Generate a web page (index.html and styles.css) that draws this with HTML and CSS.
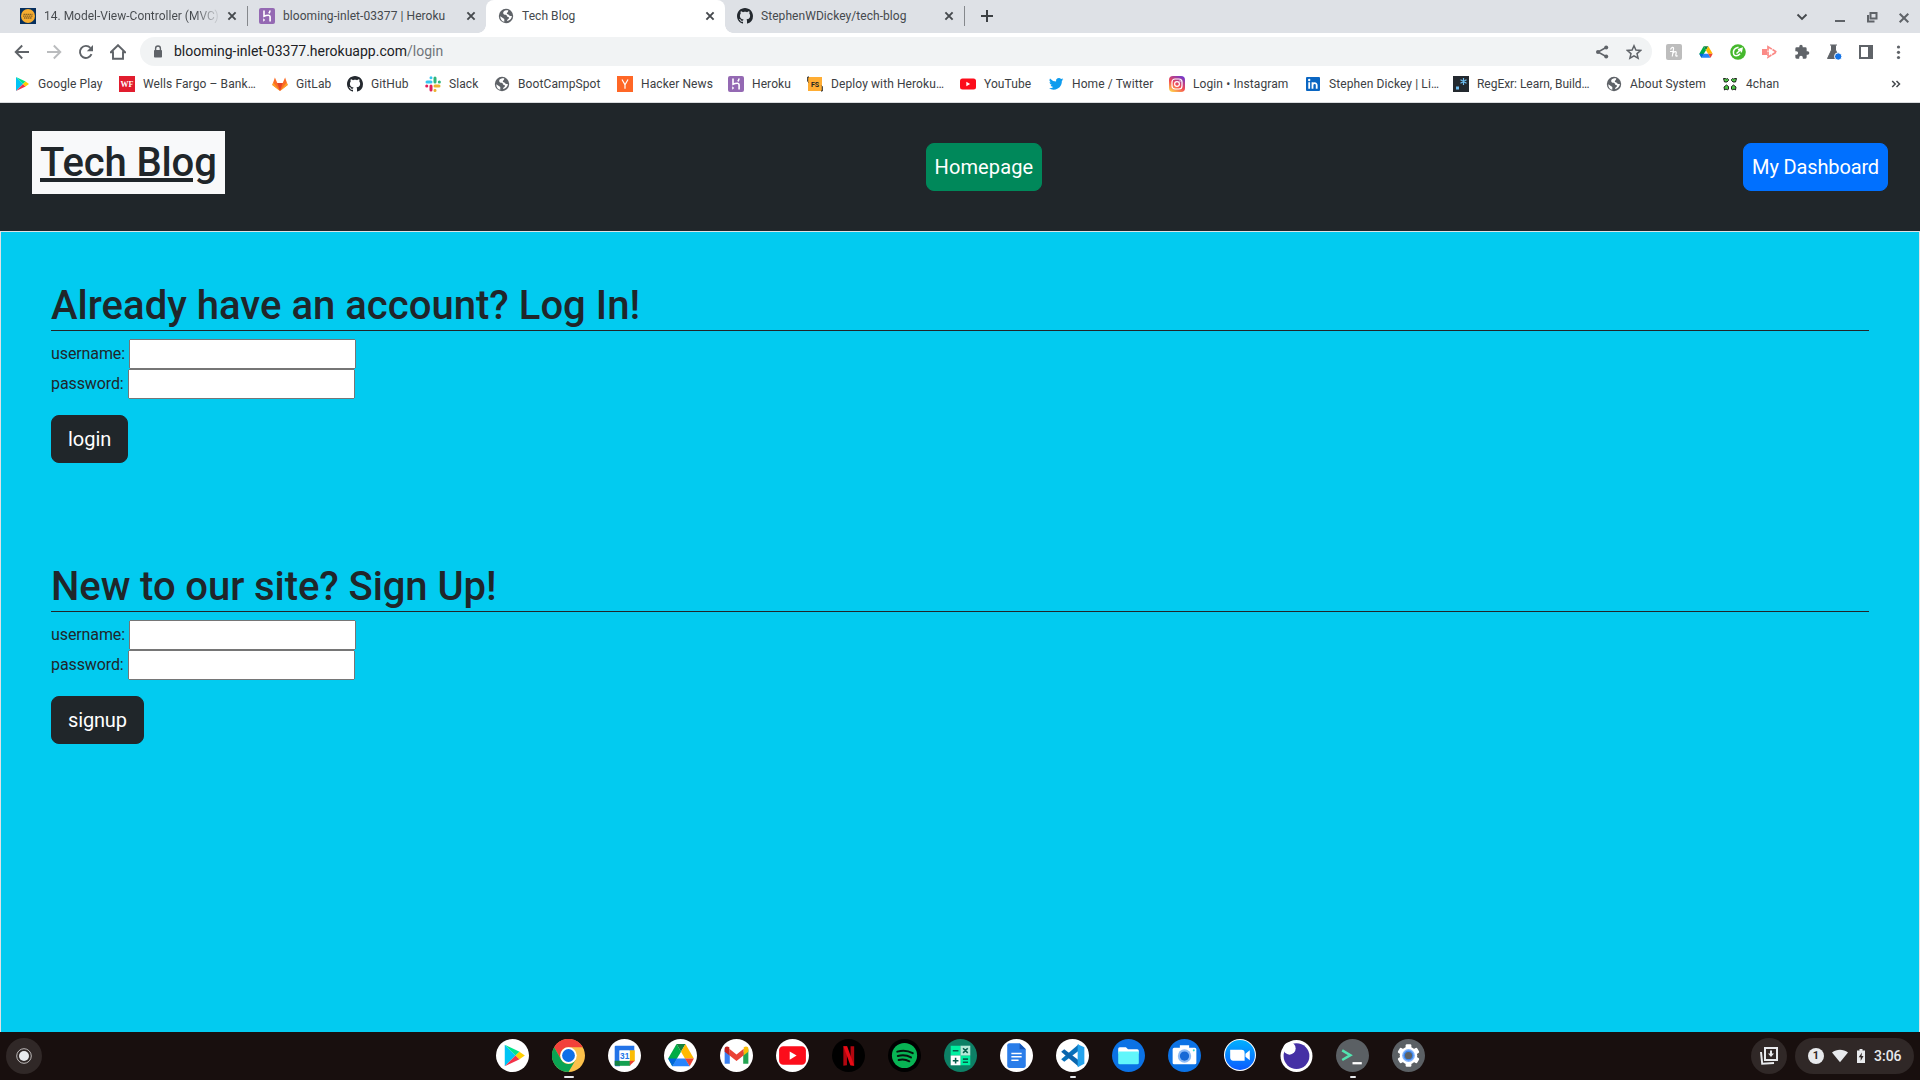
FILE: index.html
```html
<!DOCTYPE html>
<html lang="en">
<head>
<meta charset="utf-8">
<title>Tech Blog</title>
<link rel="stylesheet" href="styles.css">
</head>
<body>
<svg class="defs" width="0" height="0">
  <symbol id="x" viewBox="0 0 16 16"><path d="M4.4 4.4l7.2 7.2M11.6 4.4l-7.2 7.2" stroke="#45494d" stroke-width="1.9" fill="none"/></symbol>
  <symbol id="globe" viewBox="0 0 16 16"><circle cx="8" cy="8" r="7.2" fill="#5f6368"/><path d="M2.3 8.2l4 2.7v2.9c-2.500-.6-4.200-2.700-4-5.600zM8.200 2.300c-2 .3-3.300 1.600-3 3 .2 1.200 1.200 1.400 2.400 1.500 1.400.1 1 1.900 2.200 2.100 1.300.2 1.500.9 1 1.700-.6.9-1.700 1-1.800 2.400 2.700-.2 4.800-2.300 4.900-4.900-1.700.1-2.800-.4-3.200-1.300-.3-.8-1.800-.5-1.900-1.400-.1-.8 1.700-.9 1.400-3.100z" fill="#fff"/></symbol>
  <symbol id="github" viewBox="0 0 16 16"><path fill="#24292f" d="M8 0C3.58 0 0 3.58 0 8c0 3.54 2.29 6.53 5.47 7.59.4.07.55-.17.55-.38 0-.19-.01-.82-.01-1.49-2.01.37-2.53-.49-2.69-.94-.09-.23-.48-.94-.82-1.13-.28-.15-.68-.52-.01-.53.63-.01 1.080.58 1.230.82.72 1.210 1.870.87 2.330.66.07-.52.28-.87.51-1.070-1.780-.2-3.640-.89-3.640-3.950 0-.87.31-1.590.82-2.150-.08-.2-.36-1.020.08-2.120 0 0 .67-.21 2.200.82.64-.18 1.320-.27 2-.27s1.360.09 2 .27c1.530-1.040 2.200-.82 2.200-.82.44 1.100.16 1.920.08 2.120.51.56.82 1.270.82 2.150 0 3.070-1.870 3.750-3.650 3.950.29.25.54.73.54 1.480 0 1.070-.01 1.930-.01 2.200 0 .21.15.46.55.38A8.010 8.010 0 0 0 16 8c0-4.420-3.580-8-8-8z"/></symbol>
  <symbol id="heroku" viewBox="0 0 16 16"><rect width="16" height="16" rx="2" fill="#9469b3"/><path d="M5 2.500v5.800c1.500-.7 3-1 4.200-1 1.300 0 1.900.6 1.900 1.700v4.500M11 2.500c0 1.100-.4 2-1.200 2.900" fill="none" stroke="#fff" stroke-width="1.600"/><path d="M4.200 10.300v3.400l2-1.700z" fill="#fff"/></symbol>
  <symbol id="play" viewBox="0 0 16 16"><path d="M2 1v14l7-7z" fill="#00c4f5"/><path d="M2 1l7 7 2.600-2.400z" fill="#00e38c"/><path d="M2 15l7-7 2.600 2.400z" fill="#f43249"/><path d="M11.500 5.500L15 8l-3.500 2.500L9 8z" fill="#ffcf00"/></symbol>
  <symbol id="drive" viewBox="0 0 24 22"><path d="M8 1h8l-4 7z" fill="#15803c"/><path d="M8 1L0.500 14 4.200 21 12 8z" fill="#00ac47"/><path d="M16 1l7.500 13H15.500L12 8z" fill="#ffba00"/><path d="M4.200 21L8.200 14h7.600l4 7z" fill="#2684fc"/><path d="M15.500 14h8l-3.700 7z" fill="#ea4335"/><path d="M.5 14h7.800L4.200 21z" fill="#0066da"/></symbol>
</svg>

<div class="tabstrip">
  <div class="tab">
    <svg class="fav" viewBox="0 0 16 16"><rect width="16" height="16" fill="#08305e"/><circle cx="8" cy="8" r="7" fill="#f6ac2f"/><path d="M3.500 6.300h9M3 8.200h10M4 10h8" stroke="#8a6424" stroke-width="1.300" stroke-dasharray="1.500 .5"/></svg>
    <span class="title fade">14. Model-View-Controller (MVC)</span><svg class="close"><use href="#x"/></svg>
  </div>
  <div class="tab divided">
    <svg class="fav"><use href="#heroku"/></svg>
    <span class="title">blooming-inlet-03377 | Heroku</span><svg class="close"><use href="#x"/></svg>
  </div>
  <div class="tab active">
    <svg class="fav"><use href="#globe"/></svg>
    <span class="title">Tech Blog</span><svg class="close"><use href="#x"/></svg>
  </div>
  <div class="tab">
    <svg class="fav"><use href="#github"/></svg>
    <span class="title">StephenWDickey/tech-blog</span><svg class="close"><use href="#x"/></svg>
  </div>
  <div class="newtab"><svg width="16" height="16" viewBox="0 0 16 16"><path d="M8 2v12M2 8h12" stroke="#3c4043" stroke-width="2"/></svg></div>
  <div class="window-controls">
    <svg viewBox="0 0 16 16"><path d="M3.500 5.500L8 10l4.500-4.500" fill="none" stroke="#45494d" stroke-width="1.900"/></svg>
    <svg viewBox="0 0 16 16"><path d="M3 12h10" stroke="#5f6368" stroke-width="2"/></svg>
    <svg viewBox="0 0 16 16"><path d="M6.500 4h6v5.500h-6zM4 6v6.500h6.500" fill="none" stroke="#5f6368" stroke-width="2"/></svg>
    <svg viewBox="0 0 16 16"><path d="M3.700 4.700l8.600 8.600M12.300 4.700l-8.600 8.600" stroke="#5f6368" stroke-width="2"/></svg>
  </div>
</div>

<div class="toolbar">
  <div class="nav">
    <svg viewBox="0 0 16 16"><path d="M15 8H2M8.200 1.500L1.700 8l6.500 6.500" fill="none" stroke="#5f6368" stroke-width="1.900"/></svg>
    <svg viewBox="0 0 16 16"><path d="M1 8h13M7.800 1.500L14.300 8l-6.500 6.500" fill="none" stroke="#babcbe" stroke-width="1.900"/></svg>
    <svg viewBox="0 0 16 16"><path d="M13.500 10.200A6 6 0 1 1 12.400 3.900" fill="none" stroke="#5f6368" stroke-width="1.900"/><path d="M15 1v6.200H8.800z" fill="#5f6368"/></svg>
    <svg viewBox="0 0 16 16"><path d="M.8 8.300L8 1.200l7.200 7.100H13v6.400H3V8.300z" fill="none" stroke="#5f6368" stroke-width="1.900"/></svg>
  </div>
  <div class="omnibox">
    <svg viewBox="0 0 16 16"><rect x="4" y="6" width="8" height="7.500" rx=".8" fill="#5f6368"/><path d="M5.600 6.500V4.400a2.400 2.400 0 0 1 4.800 0v2.100" fill="none" stroke="#5f6368" stroke-width="1.400"/></svg>
    <span class="url">blooming-inlet-03377.herokuapp.com<i>/login</i></span>
    <svg viewBox="0 0 16 16"><path d="M12 3.500L4 8l8 4.500" fill="none" stroke="#5f6368" stroke-width="1.500"/><g fill="#5f6368"><circle cx="12.200" cy="3.500" r="2"/><circle cx="4" cy="8" r="2"/><circle cx="12.200" cy="12.500" r="2"/></g></svg>
    <svg viewBox="0 0 16 16"><path d="M8 1.800l1.900 4.300 4.700.4-3.600 3.100 1.100 4.600L8 11.800l-4.100 2.400L5 9.600 1.400 6.500l4.700-.4z" fill="none" stroke="#5f6368" stroke-width="1.500"/></svg>
  </div>
  <div class="extensions">
    <svg viewBox="0 0 16 16"><rect width="16" height="16" rx="2" fill="#bdbdbd"/><path d="M4.500 5.500c1-2.500 3.500-3 3-.5L6.300 12.500M4 7.500h4M6.800 9.500c1-2.300 3.700-2.700 3.400-.6l-.4 2.300c-.1 1.200.9 1.200 1.700.3" fill="none" stroke="#fff" stroke-width="1.200"/></svg>
    <svg viewBox="0 0 16 16"><svg x="1" y="1.500" width="14" height="13"><use href="#drive"/></svg></svg>
    <svg viewBox="0 0 16 16"><circle cx="8" cy="8" r="7.800" fill="#45b82c"/><path d="M8.500 3.300C5 4 3 6.500 3.500 9.500c.5 3 4.300 3.200 6.500.3M6.500 9.500L11.500 5M8 5.700l4-1.300-.8 4" fill="none" stroke="#fff" stroke-width="1.500"/></svg>
    <svg viewBox="0 0 16 16"><path d="M0 5h5v6H0z" fill="#fb8a86"/><path d="M6 2.800L14.500 8 6 13.200z" fill="none" stroke="#fb8a86" stroke-width="1.700" stroke-dasharray="4.500 .8"/></svg>
    <svg viewBox="0 0 24 24"><path fill="#5f6368" d="M20.500 11H19V7a2 2 0 0 0-2-2h-4V3.500a2.500 2.500 0 0 0-5 0V5H4a2 2 0 0 0-2 2v3.800h1.500a2.700 2.700 0 0 1 0 5.400H2V20a2 2 0 0 0 2 2h3.800v-1.500a2.700 2.700 0 0 1 5.400 0V22H17a2 2 0 0 0 2-2v-4h1.500a2.500 2.500 0 0 0 0-5z"/></svg>
    <svg viewBox="0 0 16 16"><path d="M4 1h7M5.500 1.500h4v4.500l4 8.500H1.500l4-8.500z" fill="#5f6368" stroke="#5f6368"/><circle cx="12.200" cy="12.500" r="3.700" fill="#1473e6" stroke="#fff"/></svg>
    <svg viewBox="0 0 16 16"><path d="M2 2h12v12H2z" fill="none" stroke="#5f6368" stroke-width="2"/><path d="M10 2h4v12h-4z" fill="#5f6368"/></svg>
    <svg viewBox="0 0 16 16"><g fill="#5f6368"><circle cx="8.500" cy="3" r="1.600"/><circle cx="8.500" cy="8.300" r="1.600"/><circle cx="8.500" cy="13.500" r="1.600"/></g></svg>
  </div>
</div>

<div class="bookmarks">
  <div class="bm"><svg><use href="#play"/></svg>Google Play</div>
  <div class="bm"><svg viewBox="0 0 16 16"><rect width="16" height="16" fill="#e11d2e"/><text class="wf" x="8" y="11" text-anchor="middle">WF</text></svg>Wells Fargo – Bank…</div>
  <div class="bm"><svg viewBox="0 0 16 16"><path d="M8 15L.3 9 2.900 1.500 5.300 7h5.400l2.400-5.500L15.700 9z" fill="#fc6d26"/><path d="M8 15L5.300 7h5.400z" fill="#e24329"/><path d="M8 15L.3 9l.9-2.600zM8 15l7.700-6-.9-2.600z" fill="#fca326"/></svg>GitLab</div>
  <div class="bm"><svg><use href="#github"/></svg>GitHub</div>
  <div class="bm"><svg viewBox="0 0 16 16" fill="none" stroke-width="3" stroke-linecap="round"><path d="M6 1.700V1.800M2 6h4" stroke="#36c5f0"/><path d="M10 2v4M14.300 6h.1" stroke="#2eb67d"/><path d="M10 10h4M10 14.300v.1" stroke="#ecb22e"/><path d="M6 10v4M1.700 10h.1" stroke="#e01e5a"/></svg>Slack</div>
  <div class="bm"><svg><use href="#globe"/></svg>BootCampSpot</div>
  <div class="bm"><svg viewBox="0 0 16 16"><rect width="16" height="16" fill="#ff6726"/><path d="M5 3.500l3 5.300 3-5.300M8 8.500v4.300" fill="none" stroke="#fff" stroke-width="1.200"/></svg>Hacker News</div>
  <div class="bm"><svg><use href="#heroku"/></svg>Heroku</div>
  <div class="bm"><svg viewBox="0 0 16 16"><rect x="1" y="1" width="14" height="14" fill="#ffad33"/><path d="M2 1H.7v4.500l.8.800M14 15h1.300v-4.500l-.8-.8" fill="none" stroke="#222" stroke-width="1"/><text class="fs" x="8" y="11" text-anchor="middle">FS</text></svg>Deploy with Heroku…</div>
  <div class="bm"><svg viewBox="0 0 16 16"><rect y="2.500" width="16" height="11" rx="2.500" fill="#fc0d1b"/><path d="M6.300 5.800v4.400L10.200 8z" fill="#fff"/></svg>YouTube</div>
  <div class="bm"><svg viewBox="0 0 24 24"><path fill="#0f9cee" d="M23 5a9 9 0 0 1-2.500.7 4.400 4.400 0 0 0 1.900-2.400 9 9 0 0 1-2.800 1.100 4.400 4.400 0 0 0-7.500 4A12.500 12.500 0 0 1 3 3.800a4.400 4.400 0 0 0 1.400 5.900 4.400 4.400 0 0 1-2-.6c0 2.200 1.500 4 3.500 4.400a4.400 4.400 0 0 1-2 .1 4.400 4.400 0 0 0 4.100 3A8.900 8.900 0 0 1 1.500 18.500 12.500 12.500 0 0 0 20.800 7.400 9 9 0 0 0 23 5z"/></svg>Home / Twitter</div>
  <div class="bm"><svg viewBox="0 0 16 16"><defs><linearGradient id="ig" x1=".2" y1="1" x2=".8" y2="0"><stop offset="0" stop-color="#ffd04f"/><stop offset=".45" stop-color="#f34852"/><stop offset="1" stop-color="#7137cc"/></linearGradient></defs><rect width="16" height="16" rx="4" fill="url(#ig)"/><rect x="3" y="3" width="10" height="10" rx="3" fill="none" stroke="#fff" stroke-width="1.200"/><circle cx="8" cy="8" r="2.400" fill="none" stroke="#fff" stroke-width="1.200"/><circle cx="11" cy="5" r=".7" fill="#fff"/></svg>Login • Instagram</div>
  <div class="bm"><svg viewBox="0 0 16 16"><rect x="1" y="1" width="14" height="14" rx="1" fill="#0a66c2"/><path d="M4.200 6.300v6.500M7.500 12.800V6.300M7.500 9.500c0-3 4.200-3 4.200-.3v3.600" fill="none" stroke="#fff" stroke-width="1.800"/><circle cx="4.200" cy="4" r="1.200" fill="#fff"/></svg>Stephen Dickey | Li…</div>
  <div class="bm tight"><svg viewBox="0 0 16 16"><rect width="16" height="16" fill="#23292f"/><path d="M3 10.500h3v3H3z" fill="#6fbef0"/><path d="M10.500 2v7M7.500 3.700l6 3.600M13.500 3.700l-6 3.600" stroke="#6fbef0" stroke-width="1.200"/></svg>RegExr: Learn, Build…</div>
  <div class="bm"><svg><use href="#globe"/></svg>About System</div>
  <div class="bm"><svg viewBox="0 0 16 16" fill="#4cc545" stroke="#111" stroke-width=".9"><path d="M1.500 2.500h2l1 .5 1-.5 1 1v1L5 6H2.500L2 4.500zM14.500 2.500h-2l-1 .5-1-.5-1 1v1L11 6h2.500l.5-1.500zM2.500 14l-.5-3 2.500-2 2 1.500v2.500l-1 1-1.500-1zM13.500 14l.5-3-2.500-2-2 1.500v2.500l1 1 1.500-1z"/></svg>4chan</div>
  <svg class="overflow" width="10" height="10" viewBox="0 0 10 10"><path d="M1.200 2l3 3-3 3M5.500 2l3 3-3 3" fill="none" stroke="#45494d" stroke-width="1.500"/></svg>
</div>

<header class="site-header">
  <h1><a>Tech Blog</a></h1>
  <a class="btn home">Homepage</a>
  <a class="btn dash">My Dashboard</a>
</header>
<main>
  <form>
    <h2>Already have an account? Log In!</h2>
    <div class="field"><label>username: <input type="text"></label></div>
    <div class="field"><label>password: <input type="password"></label></div>
    <button type="button" class="btn dark">login</button>
  </form>
  <form>
    <h2 class="signup-title">New to our site? Sign Up!</h2>
    <div class="field"><label>username: <input type="text"></label></div>
    <div class="field"><label>password: <input type="password"></label></div>
    <button type="button" class="btn dark signup">signup</button>
  </form>
</main>

<footer class="shelf">
  <div class="launcher"><svg width="16" height="16" viewBox="0 0 16 16"><circle cx="8" cy="8" r="7.300" fill="none" stroke="#bdb9b9"/><circle cx="8" cy="8" r="5" fill="#e8eaed"/></svg></div>
  <div class="apps">
    <div class="app"><svg viewBox="0 0 32 32"><circle cx="16" cy="16" r="16" fill="#fff"/><svg x="5" y="4" width="25" height="24"><use href="#play"/></svg></svg></div>
    <div class="app run focus"><svg viewBox="0 0 32 32"><circle cx="16" cy="16" r="16" fill="#fbc04a"/><path d="M2.100 8A16 16 0 0 1 29.900 8H16a8 8 0 0 0-7 12z" fill="#f2413a"/><path d="M2.100 8A16 16 0 0 0 16 32l7-12a8 8 0 0 1-14 0z" fill="#0aa453"/><circle cx="16" cy="16" r="8" fill="#fff"/><circle cx="16" cy="16" r="6.200" fill="#0f6fe8"/></svg></div>
    <div class="app"><svg viewBox="0 0 32 32"><circle cx="16" cy="16" r="16" fill="#fff"/><path d="M6.500 7.500a1 1 0 0 1 1-1h18v5h-14v15h-4a1 1 0 0 1-1-1z" fill="#2374e8"/><path d="M21 11h5v10.500h-5z" fill="#fbbc04"/><path d="M11 21h10.500v5H11z" fill="#14a050"/><path d="M21 21h5l-5 5z" fill="#ea4335"/><path d="M6.500 21h5v5h-4a1 1 0 0 1-1-1z" fill="#138242"/><path d="M11 11h10v10H11z" fill="#fff"/><text class="cal" x="16.200" y="19" text-anchor="middle">31</text></svg></div>
    <div class="app"><svg viewBox="0 0 32 32"><circle cx="16" cy="16" r="16" fill="#fff"/><svg x="3.500" y="3.700" width="26" height="24"><use href="#drive"/></svg></svg></div>
    <div class="app"><svg viewBox="0 0 32 32"><circle cx="16" cy="16" r="16" fill="#fff"/><path d="M4.500 10v14h5V14z" fill="#3a80f0"/><path d="M22.500 13v11h5V10z" fill="#25a552"/><path d="M9 9.500l7 5.500 7-5.500v6.300l-7 5.500-7-5.500z" fill="#ea4335"/><path d="M4.500 11V9.500c0-2.500 2.500-3 4.500-1.500v7.800l-4.500-3.500z" fill="#c5221f"/><path d="M27.500 11V9.500c0-2.500-2.500-3-4.500-1.500v7.800l4.500-3.500z" fill="#fbbc04"/></svg></div>
    <div class="app"><svg viewBox="0 0 32 32"><circle cx="16" cy="16" r="16" fill="#fff"/><rect x="3" y="7" width="26" height="18" rx="4" fill="#fc0d1b"/><path d="M13.300 12v8l6.700-4z" fill="#fff"/></svg></div>
    <div class="app"><svg viewBox="0 0 32 32"><circle cx="16" cy="16" r="16" fill="#000"/><path d="M11 7h3.500v18.500l-3.500.4zM18 7h3.500v18.900l-3.500-.4z" fill="#b0060f"/><path d="M11 7h3.700l6.800 18.900-3.700-.4z" fill="#e80b16"/></svg></div>
    <div class="app"><svg viewBox="0 0 32 32"><circle cx="16" cy="16" r="16" fill="#000"/><circle cx="16" cy="16" r="12.200" fill="#08b454"/><path d="M9 12.300c5-1.500 10.500-1 15 1.500M9.500 16.500c4.300-1.200 9-.8 12.800 1.400M10.300 20.300c3.700-.9 7.200-.5 10.400 1.300" fill="none" stroke="#06150d" stroke-width="1.900" stroke-linecap="round"/></svg></div>
    <div class="app"><svg viewBox="0 0 32 32"><circle cx="16" cy="16" r="16" fill="#0d8065"/><path d="M6.500 6.500H16V16H6.500zM16 16h9.500v9.500H16z" fill="#00efa0"/><path d="M16 6.500h9.500V16H16z" fill="#b8e8d8"/><path d="M6.500 16H16v9.500H6.500z" fill="#fff"/><path d="M8.500 11.300h5.500M18.500 9l4.500 4.500M23 9l-4.500 4.500M8.500 21H14M11.250 18.200v5.600M18.300 19.500h5M18.300 22.500h5" stroke="#075e4c" stroke-width="1.500"/></svg></div>
    <div class="app"><svg viewBox="0 0 32 32"><circle cx="16" cy="16" r="16" fill="#fff"/><path d="M9 4h10l6 6v16a2 2 0 0 1-2 2H9a2 2 0 0 1-2-2V6a2 2 0 0 1 2-2z" fill="#2a7de9"/><path d="M19 4l6 6h-6z" fill="#1656b5"/><path d="M11 14h10M11 17.300h10M11 20.600h7" stroke="#fff" stroke-width="1.500"/></svg></div>
    <div class="app run"><svg viewBox="0 0 32 32"><circle cx="16" cy="16" r="16" fill="#fff"/><path d="M22 5v6.500L8 22l-3-2.300z" fill="#0871bb"/><path d="M22 27v-6.500L8 10l-3 2.300z" fill="#0a65ad"/><path d="M21 5l6.500 3v16L21 27.500z" fill="#24a3ec"/></svg></div>
    <div class="app"><svg viewBox="0 0 32 32"><circle cx="16" cy="16" r="16" fill="#0b72e5"/><path d="M6 9.500a1.500 1.500 0 0 1 1.500-1.500h6l2 2h9a1.500 1.500 0 0 1 1.500 1.500V14H6z" fill="#fff"/><path d="M6 12h20v11a1.500 1.500 0 0 1-1.500 1.500h-17A1.500 1.500 0 0 1 6 23z" fill="#61f6fb"/></svg></div>
    <div class="app"><svg viewBox="0 0 32 32"><circle cx="16" cy="16" r="16" fill="#0b72e5"/><path d="M11.500 6h9v2.500H26A1.500 1.500 0 0 1 27.500 10v13a1.500 1.500 0 0 1-1.500 1.500H6A1.500 1.500 0 0 1 4.500 23V10A1.500 1.500 0 0 1 6 8.500h5.500z" fill="#fff"/><circle cx="16" cy="16.500" r="6.500" fill="#8ebcf7"/><circle cx="16" cy="16.500" r="4.500" fill="#1769d6"/><circle cx="25" cy="11" r="1" fill="#36d9d3"/></svg></div>
    <div class="app"><svg viewBox="0 0 32 32"><defs><linearGradient id="zm" x2="0" y2="1"><stop stop-color="#00b0ff"/><stop offset="1" stop-color="#0b5cff"/></linearGradient></defs><circle cx="15.500" cy="15.500" r="15.500" fill="#fff"/><circle cx="15.500" cy="15.500" r="14.500" fill="url(#zm)"/><path d="M6 10.500h11a3 3 0 0 1 3 3v7.500H9a3 3 0 0 1-3-3zM20.800 14.200L25 10.800v9.700l-4.200-3.200z" fill="#fff"/></svg></div>
    <div class="app"><svg viewBox="0 0 32 32"><circle cx="16" cy="16.500" r="15.500" fill="#fff"/><circle cx="16" cy="16.500" r="12.500" fill="#4530a5"/><circle cx="9.200" cy="9.200" r="6" fill="#fff"/></svg></div>
    <div class="app run"><svg viewBox="0 0 32 32"><circle cx="16" cy="16" r="16" fill="#5b6064"/><path d="M6 11l8 4.700-8 4.700" fill="none" stroke="#52e4b0" stroke-width="2.400"/><path d="M16 23.500h9" stroke="#fff" stroke-width="2.200"/></svg></div>
    <div class="app"><svg viewBox="0 0 32 32"><circle cx="16" cy="16" r="16" fill="#5b6064"/><circle cx="16" cy="16" r="8.500" fill="#fff"/><g fill="#fff"><rect id="g" x="13.200" y="5.200" width="5.600" height="21.600" rx="1.200"/><use href="#g" transform="rotate(60 16 16)"/><use href="#g" transform="rotate(120 16 16)"/></g><circle cx="16" cy="16" r="6.200" fill="#86b4f8"/><circle cx="16" cy="16" r="4.800" fill="#3a85ed"/><circle cx="16" cy="16" r="3.500" fill="#5b6064"/></svg></div>
  </div>
  <div class="tray">
    <div class="holding"><svg width="20" height="20" viewBox="0 0 20 20" fill="none" stroke="#e8eaed" stroke-width="2"><path d="M6 2h12v12H6zM2 6l1.200 11.800L15 17"/><path d="M12 4.500v4"/><path d="M9 7.500h6L12 11z" fill="#e8eaed" stroke="none"/></svg></div>
    <div class="status">
      <span class="count">1</span>
      <svg class="wifi" width="16" height="16" viewBox="0 0 16 16"><path d="M0 4.600C4.800.9 11.200.9 16 4.600L8 14.300z" fill="#e8eaed"/></svg>
      <svg class="battery" width="8" height="16" viewBox="0 0 8 16"><path d="M2.500 1h3v1.500H8V15H0V2.500h2.500z" fill="#e8eaed"/><path d="M5 4.500L1.700 9.200h2v3.800L6.500 8h-2z" fill="#302827"/></svg>
      <span class="time">3:06</span>
    </div>
  </div>
</footer>
</body>
</html>
```
FILE: styles.css
```css
* { box-sizing: border-box; }
body {
  margin: 0;
  height: 1080px;
  overflow: hidden;
  display: flex;
  flex-direction: column;
  font-family: Roboto, "Liberation Sans", sans-serif;
  color: #20262a;
  background: #fff;
}
.defs { position: absolute; }
svg { flex: none; display: block; }

/* Browser tabs */
.tabstrip {
  height: 33px;
  background: #dee1e6;
  display: flex;
  padding-left: 8px;
  font-size: 12px;
  color: #45494d;
}
.tab {
  width: 239px;
  height: 33px;
  padding: 0 7px 1px 12px;
  display: flex;
  align-items: center;
}
.fav { width: 16px; height: 16px; margin-right: 8px; }
.title { flex: 1; min-width: 0; white-space: nowrap; letter-spacing: .06px; }
.fade {
  letter-spacing: 0;
  color: transparent;
  background: linear-gradient(90deg, #45494d 150px, #dee1e6 178px);
  -webkit-background-clip: text;
  background-clip: text;
}
.close { width: 16px; height: 16px; margin-left: 6px; }
.divided {
  background: linear-gradient(#85888c, #85888c) 0 6px / 1px 20px no-repeat;
}
.active {
  background: #fff;
  border-radius: 8px 8px 0 0;
  position: relative;
}
.active::before, .active::after {
  content: "";
  position: absolute;
  bottom: 0;
  width: 8px;
  height: 8px;
}
.active::before { left: -8px; background: radial-gradient(circle at 0 0, transparent 7.500px, #fff 8px); }
.active::after { right: -8px; background: radial-gradient(circle at 8px 0, transparent 7.500px, #fff 8px); }
.newtab {
  margin-top: 6px;
  height: 20px;
  border-left: 1px solid #85888c;
  padding: 2px 0 0 14px;
}
.window-controls {
  flex: 1;
  display: flex;
  justify-content: flex-end;
  align-items: center;
  gap: 16px;
  padding-right: 8px;
}
.window-controls svg { width: 16px; height: 16px; }
.window-controls svg:first-child { margin-right: 6px; }

/* Address row */
.toolbar {
  height: 37px;
  display: flex;
  align-items: center;
  padding: 0 14px;
}
.nav { display: flex; gap: 16px; }
.nav svg, .extensions svg { width: 16px; height: 16px; }
.extensions svg svg { width: 14px; height: 13px; }
.omnibox {
  flex: 1;
  height: 29px;
  margin: 0 14px;
  background: #f1f3f4;
  border-radius: 15px;
  display: flex;
  align-items: center;
  gap: 16px;
  padding: 0 10px;
}
.omnibox svg { width: 16px; height: 16px; }
.url { flex: 1; margin: -1px 0 0 -8px; font-size: 14px; color: #202124; }
.url i { font-style: normal; color: #70757a; }
.extensions { display: flex; gap: 16px; }

.bookmarks {
  height: 33px;
  padding: 0 19px 4px 14px;
  border-bottom: 1px solid #d9dbde;
  display: grid;
  grid-template-columns: 105px 153px 75px 78px 69px 123px 111px 79px 153px 88px 121px 136px 148px 153px 116px 1fr auto;
  align-items: center;
  font-size: 12px;
  letter-spacing: .1px;
  color: #3c4043;
  white-space: nowrap;
}
.bm { display: flex; align-items: center; gap: 8px; }
.bm svg { width: 16px; height: 16px; }
.tight { letter-spacing: -.04px; }
.wf { font: bold 8px "Liberation Serif", serif; fill: #fff; letter-spacing: 0; }
.fs { font: bold 7px Roboto, sans-serif; fill: #222; letter-spacing: 0; }

/* Site */
.site-header {
  height: 128px;
  background: #20262a;
  padding: 0 32px;
  display: flex;
  justify-content: space-between;
  align-items: flex-start;
}
h1, h2 { margin: 0; font-size: 40px; font-weight: 500; line-height: 48px; }
h1 { padding-top: 36px; letter-spacing: -.12px; }
h1 a {
  background: #f8f9fa;
  padding: 8px;
  text-decoration: underline;
}
.btn {
  font: 400 20px/30px Roboto, "Liberation Sans", sans-serif;
  color: #fff;
  height: 48px;
  border: 1px solid transparent;
  border-radius: 8px;
  padding: 8px;
}
.home, .dash { margin-top: 40px; }
.home { background: #00885a; border-color: #00885a; letter-spacing: .1px; }
.dash { background: #0070ff; border-color: #0070ff; letter-spacing: -.14px; }
main {
  flex: 1;
  background: #02cbf0;
  border: 1px solid #dee2e6;
  border-bottom: 0;
  padding: 50px;
}
form { height: 281px; }
h2 { height: 49px; border-bottom: 1px solid #20262a; margin-bottom: 8px; letter-spacing: .03px; }
.signup-title { letter-spacing: -.08px; }
.field { height: 30px; font-size: 16px; line-height: 30px; white-space: nowrap; letter-spacing: -.1px; }
input { width: 227px; height: 30px; margin: 0; font: 16px/24px Roboto, sans-serif; vertical-align: top; }
.dark { margin-top: 16px; padding: 8px 16px; background: #20262a; border-color: #20262a; display: block; }
.signup { letter-spacing: -.15px; }

/* System shelf */
.shelf {
  height: 48px;
  background: #180f0e;
  display: grid;
  grid-template-columns: 1fr auto 1fr;
  align-items: center;
  padding: 0 6px;
}
.launcher, .holding {
  width: 36px;
  height: 36px;
  border-radius: 50%;
  background: #302827;
  display: flex;
  align-items: center;
  justify-content: center;
}
.apps { display: flex; gap: 23px; height: 48px; padding: 7px 0 0 1px; }
.app { width: 33px; display: flex; flex-direction: column; align-items: center; gap: 4px; }
.app > svg { width: 33px; height: 33px; }
.run::after { content: ""; width: 6px; height: 2px; background: #e8eaed; border-radius: 1px; }
.focus::after { width: 10px; }
.cal { font: 700 8px "Liberation Sans", sans-serif; fill: #2374e8; }
.tray { display: flex; justify-content: flex-end; gap: 8px; }
.status {
  height: 36px;
  width: 119px;
  border-radius: 18px;
  background: #302827;
  display: flex;
  align-items: center;
  padding-left: 13px;
  color: #e8eaed;
}
.count {
  width: 16px;
  height: 16px;
  border-radius: 50%;
  background: #e8eaed;
  color: #302827;
  font: 700 11px/16px Roboto, sans-serif;
  text-align: center;
}
.wifi { margin-left: 8px; }
.battery { margin-left: 9px; }
.time { margin-left: 9px; font-size: 14px; font-weight: 500; }
```
